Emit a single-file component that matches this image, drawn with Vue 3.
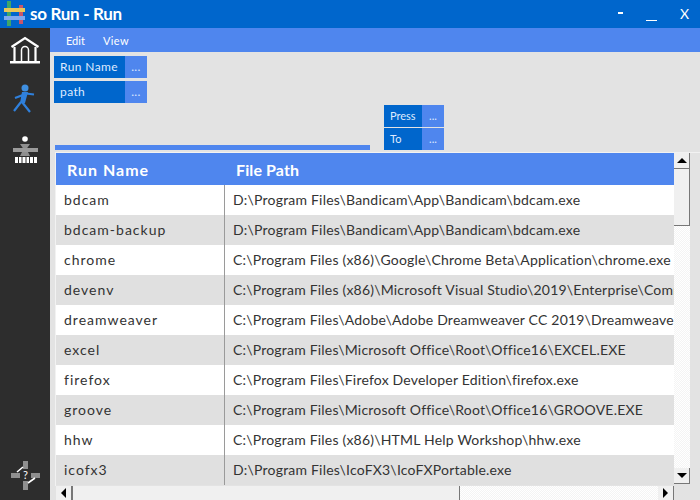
<template>
  <div class="window">
    <header class="titlebar">
      <svg class="logo" width="28" height="28" viewBox="0 0 28 28">
        <rect x="7" y="1" width="4" height="25" fill="#3fa66a" />
        <rect x="19" y="5" width="4" height="19" fill="#c9566b" />
        <rect x="4" y="8" width="21" height="4" fill="#e8c75a" />
        <rect x="4" y="16" width="21" height="4" fill="#7fa8ee" />
      </svg>
      <span class="title">so Run - Run</span>
      <div class="win-controls">
        <span class="dash"></span>
        <span class="minimize"></span>
        <span class="close">X</span>
      </div>
    </header>

    <div class="body">
      <aside class="sidebar">
        <svg class="side-icon" width="32" height="30" viewBox="0 0 32 30">
          <path d="M2.5 11 L16 2 L29.5 11" stroke="#fff" stroke-width="2.2" fill="none" />
          <path d="M5.5 11 V25 M26.5 11 V25" stroke="#fff" stroke-width="2.2" />
          <path d="M12.5 25 V14 a3.5 3.5 0 0 1 7 0 V25" stroke="#fff" stroke-width="1.5" fill="none" />
          <rect x="1" y="25" width="30" height="2.5" fill="#fff" />
        </svg>
        <svg class="side-icon runner" width="28" height="32" viewBox="0 0 28 32">
          <circle cx="14" cy="4" r="3.5" fill="#3f8fe0" />
          <path d="M11 8 L17 8 L14 19 L9 19 Z" fill="#2f80dc" />
          <path d="M15 9.5 L23 10.5 M12 11 L4 14 M10 18 L3 27 M11 18 L19 28" stroke="#2f80dc" stroke-width="2.2" fill="none" />
        </svg>
        <svg class="side-icon pause" width="28" height="30" viewBox="0 0 28 30">
          <circle cx="14" cy="4" r="2.8" fill="#fff" />
          <path d="M9 9 H19 L15.5 14 L19 21 H9 L12.5 14 Z" fill="#8f8f8f" />
          <rect x="2" y="13" width="25" height="4" fill="#9a9a9a" />
          <path d="M4 22 H26 V28 H4 Z" fill="#fff" />
          <path d="M7.5 22 V28 M11 22 V28 M15 22 V28 M18.5 22 V28 M22.5 22 V28" stroke="#2d2d2d" stroke-width="1" />
        </svg>
        <svg class="side-icon help" width="30" height="30" viewBox="0 0 30 30">
          <rect x="13" y="1" width="5" height="8" fill="#8f8f8f" />
          <rect x="13" y="21" width="5" height="9" fill="#8f8f8f" />
          <rect x="1" y="13" width="9" height="5" fill="#8f8f8f" />
          <rect x="21" y="13" width="9" height="5" fill="#8f8f8f" />
          <path d="M7 12 L13 7 M18 23 L25 18" stroke="#fff" stroke-width="1.6" />
          <text x="15.5" y="19" class="help-mark">?</text>
        </svg>
      </aside>

      <main class="main">
        <nav class="menubar">
          <span>Edit</span>
          <span class="view">View</span>
        </nav>

        <div class="content">
          <div class="fields">
            <div v-for="f in fields" :key="f" class="field">
              <span class="field-label">{{ f }}</span>
              <span class="field-btn">...</span>
            </div>
          </div>

          <div class="mid">
            <div class="progress"></div>
            <div class="small-fields">
              <div v-for="f in smallFields" :key="f" class="field small">
                <span class="field-label">{{ f }}</span>
                <span class="field-btn">...</span>
              </div>
            </div>
          </div>

          <div class="grid-wrap">
            <div class="grid-area">
              <div class="table">
                <div class="thead">
                  <div class="col-name">Run Name</div>
                  <div class="col-path">File Path</div>
                </div>
                <div v-for="(r, i) in rows" :key="r.name" class="row" :class="{ alt: i % 2 === 1 }">
                  <div class="col-name">{{ r.name }}</div>
                  <div class="col-path">{{ r.path }}</div>
                </div>
              </div>
              <div class="vscroll">
                <div class="sb-btn"><span class="arrow up"></span></div>
                <div class="sb-thumb v"></div>
                <div class="sb-track"></div>
                <div class="sb-btn"><span class="arrow down"></span></div>
              </div>
            </div>
            <div class="hscroll">
              <div class="sb-btn h"><span class="arrow left"></span></div>
              <div class="sb-thumb h"></div>
              <div class="sb-track"></div>
              <div class="sb-btn h"><span class="arrow right"></span></div>
            </div>
          </div>
        </div>
      </main>
    </div>
  </div>
</template>

<script setup>
const fields = ['Run Name', 'path']
const smallFields = ['Press', 'To']

const rows = [
  { name: 'bdcam', path: 'D:\\Program Files\\Bandicam\\App\\Bandicam\\bdcam.exe' },
  { name: 'bdcam-backup', path: 'D:\\Program Files\\Bandicam\\App\\Bandicam\\bdcam.exe' },
  { name: 'chrome', path: 'C:\\Program Files (x86)\\Google\\Chrome Beta\\Application\\chrome.exe' },
  { name: 'devenv', path: 'C:\\Program Files (x86)\\Microsoft Visual Studio\\2019\\Enterprise\\Common7\\IDE\\devenv.exe' },
  { name: 'dreamweaver', path: 'C:\\Program Files\\Adobe\\Adobe Dreamweaver CC 2019\\Dreamweaver.exe' },
  { name: 'excel', path: 'C:\\Program Files\\Microsoft Office\\Root\\Office16\\EXCEL.EXE' },
  { name: 'firefox', path: 'C:\\Program Files\\Firefox Developer Edition\\firefox.exe' },
  { name: 'groove', path: 'C:\\Program Files\\Microsoft Office\\Root\\Office16\\GROOVE.EXE' },
  { name: 'hhw', path: 'C:\\Program Files (x86)\\HTML Help Workshop\\hhw.exe' },
  { name: 'icofx3', path: 'D:\\Program Files\\IcoFX3\\IcoFXPortable.exe' }
]
</script>

<style>
html, body { margin: 0; background: #e3e3e3; }
</style>

<style scoped>
.window {
  width: 700px;
  height: 500px;
  display: flex;
  flex-direction: column;
  overflow: hidden;
  font-family: "Lato", "Open Sans", sans-serif;
  background: #e3e3e3;
}

.titlebar {
  height: 28px;
  flex: none;
  display: flex;
  align-items: center;
  background: #0066cc;
  color: #fff;
}

.logo { flex: none; }

.title {
  margin-left: 2px;
  margin-top: -2px;
  font-size: 17px;
  font-weight: 700;
  letter-spacing: -0.3px;
}

.win-controls {
  margin-left: auto;
  display: flex;
  align-items: center;
  height: 28px;
  width: 90px;
}

.dash { width: 5px; height: 2px; background: #fff; margin-left: 8px; margin-top: -2px; }
.minimize { width: 11px; height: 1px; background: #fff; margin-left: 23px; margin-top: 13px; }
.close { font-size: 14px; margin-left: 23px; margin-top: -2px; }

.body { flex: 1; display: flex; min-height: 0; }

.sidebar {
  width: 50px;
  flex: none;
  display: flex;
  flex-direction: column;
  align-items: center;
  background: #2d2d2d;
  padding-top: 8px;
  box-sizing: border-box;
}

.runner { margin-top: 18px; }
.pause { margin-top: 19px; }
.help { margin-top: auto; margin-bottom: 10px; }
.help-mark { fill: #fff; font-size: 11px; text-anchor: middle; font-family: "Lato", sans-serif; }

.main { flex: 1; display: flex; flex-direction: column; min-width: 0; }

.menubar {
  height: 24px;
  flex: none;
  display: flex;
  align-items: center;
  gap: 18px;
  padding-left: 16px;
  background: #4f86ee;
  color: #fff;
  font-size: 11px;
}

.view { letter-spacing: 0.4px; }

.content {
  flex: 1;
  min-height: 0;
  display: flex;
  flex-direction: column;
  padding: 4px 0 0 4px;
}

.fields { display: flex; flex-direction: column; gap: 3px; }

.field {
  display: flex;
  height: 22px;
  color: #dfeaff;
  font-size: 12px;
  letter-spacing: 0.4px;
  line-height: 22px;
}

.field-label {
  width: 71px;
  padding-left: 6px;
  box-sizing: border-box;
  background: #0066cc;
}

.field-btn {
  width: 22px;
  text-align: center;
  background: #4f86ee;
}

.mid {
  display: flex;
  align-items: flex-end;
  height: 47px;
  margin-bottom: 2px;
  padding-left: 1px;
}

.progress { width: 315px; height: 5px; background: #4f86ee; }

.small-fields {
  display: flex;
  flex-direction: column;
  gap: 1px;
  margin-left: 14px;
}

.field.small { font-size: 11px; letter-spacing: 0; }
.field.small .field-label { width: 38px; }

.grid-wrap { flex: 1; min-height: 0; display: flex; flex-direction: column; padding-left: 1px; }

.grid-area {
  flex: 1;
  min-height: 0;
  display: flex;
  border-top: 1px solid #f2f2f2;
  border-left: 1px solid #f2f2f2;
}

.table { width: 618px; overflow: hidden; flex: none; }

.thead {
  display: flex;
  height: 32px;
  background: #4f86ee;
  color: #fff;
  font-size: 16px;
  font-weight: 700;
  line-height: 33px;
}

.thead .col-name { padding-left: 11px; letter-spacing: 1px; }
.thead .col-path { padding-left: 12px; letter-spacing: 0.1px; border-left: none; }

.row {
  display: flex;
  height: 30px;
  line-height: 30px;
  background: #fff;
  color: #333;
  font-size: 14px;
  white-space: nowrap;
}

.row.alt { background: #e0e0e0; }

.col-name { width: 168px; flex: none; box-sizing: border-box; padding-left: 8px; letter-spacing: 1px; }
.col-path { flex: 1; overflow: hidden; border-left: 1px solid #9a9a9a; padding-left: 8px; letter-spacing: 0.2px; }

.vscroll {
  width: 16px;
  flex: none;
  display: flex;
  flex-direction: column;
  margin-bottom: 2px;
}

.hscroll {
  height: 14px;
  width: 618px;
  margin-left: 1px;
  flex: none;
  display: flex;
}

.sb-btn {
  width: 16px;
  height: 16px;
  flex: none;
  display: flex;
  align-items: center;
  justify-content: center;
  background: #f0f0f0;
  border-right: 1px solid #777;
  border-bottom: 1px solid #777;
  box-sizing: border-box;
}

.sb-btn.h { height: 14px; border-bottom: none; }

.sb-thumb.v {
  height: 57px;
  flex: none;
  background: #f0f0f0;
  border-right: 1px solid #777;
  border-bottom: 1px solid #777;
  box-sizing: border-box;
}

.sb-thumb.h {
  width: 388px;
  flex: none;
  background: #f0f0f0;
  border-right: 1px solid #777;
  border-left: 1px solid #777;
  box-sizing: border-box;
}

.sb-track {
  flex: 1;
  background: repeating-conic-gradient(#f4f4f4 0 25%, #fff 0 50%) 0 0 / 2px 2px;
}

.arrow { width: 0; height: 0; display: block; }
.arrow.up { border: 5px solid transparent; border-top: none; border-bottom-color: #000; }
.arrow.down { border: 5px solid transparent; border-bottom: none; border-top-color: #000; }
.arrow.left { border: 5px solid transparent; border-left: none; border-right-color: #000; }
.arrow.right { border: 5px solid transparent; border-right: none; border-left-color: #000; }
</style>
